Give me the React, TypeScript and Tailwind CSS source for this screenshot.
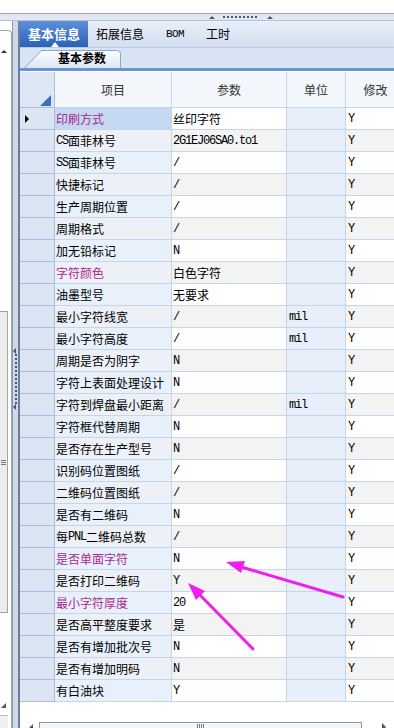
type Row = { name: string; value: string; unit?: string; hot?: boolean };

const rows: Row[] = [
  { name: '印刷方式', value: '丝印字符', hot: true },
  { name: 'CS面菲林号', value: '2G1EJ06SA0.to1' },
  { name: 'SS面菲林号', value: '/' },
  { name: '快捷标记', value: '/' },
  { name: '生产周期位置', value: '/' },
  { name: '周期格式', value: '/' },
  { name: '加无铅标记', value: 'N' },
  { name: '字符颜色', value: '白色字符', hot: true },
  { name: '油墨型号', value: '无要求' },
  { name: '最小字符线宽', value: '/', unit: 'mil' },
  { name: '最小字符高度', value: '/', unit: 'mil' },
  { name: '周期是否为阴字', value: 'N' },
  { name: '字符上表面处理设计', value: 'N' },
  { name: '字符到焊盘最小距离', value: '/', unit: 'mil' },
  { name: '字符框代替周期', value: 'N' },
  { name: '是否存在生产型号', value: 'N' },
  { name: '识别码位置图纸', value: '/' },
  { name: '二维码位置图纸', value: '/' },
  { name: '是否有二维码', value: 'N' },
  { name: '每PNL二维码总数', value: '/' },
  { name: '是否单面字符', value: 'N', hot: true },
  { name: '是否打印二维码', value: 'Y' },
  { name: '最小字符厚度', value: '20', hot: true },
  { name: '是否高平整度要求', value: '是' },
  { name: '是否有增加批次号', value: 'N' },
  { name: '是否有增加明码', value: 'N' },
  { name: '有白油块', value: 'Y' },
];

// ascii runs get the half-width mono look of the old grid font
function Mixed({ text }: { text: string }) {
  const parts = text.split(/([\x20-\x7e]+)/).filter(Boolean);
  return (
    <>
      {parts.map((p, i) =>
        /^[\x20-\x7e]+$/.test(p) ? (
          <span key={i} className="font-['Liberation_Mono',monospace] tracking-[-1.2px]">
            {p}
          </span>
        ) : (
          <span key={i}>{p}</span>
        )
      )}
    </>
  );
}

function LeftStrip() {
  return (
    <div className="w-[20px] shrink-0 flex">
      {/* collapsed left panel with its scrollbar */}
      <div className="w-[12px] flex flex-col bg-white">
        <div className="h-[9px] shrink-0" />
        <div className="flex-1 border-t border-r border-[#98a3b3] rounded-tr-[4px] flex flex-col">
          <div className="w-[8px] flex-1 flex flex-col">
            <div className="h-[19px] shrink-0" />
            <div className="h-[4px] flex justify-center">
              <div className="w-0 h-0 border-x-[3px] border-x-transparent border-b-[3px] border-b-[#333]" />
            </div>
            <div className="h-[257px] shrink-0" />
            <div className="h-[302px] shrink-0 border-t border-r border-b border-[#a3a3a3] bg-[#ededed] flex items-center justify-center">
              <div className="flex flex-col gap-[1px]">
                <div className="w-[5px] h-[1px] bg-[#777]" />
                <div className="w-[5px] h-[1px] bg-[#777]" />
                <div className="w-[5px] h-[1px] bg-[#777]" />
              </div>
            </div>
            <div className="flex-1" />
            <div className="h-[12px] shrink-0 flex items-start pl-[1px]">
              <div className="w-0 h-0 border-l-[5px] border-l-transparent border-b-[5px] border-b-[#555]" />
            </div>
            <div className="h-[13px] shrink-0 border-t border-[#c0c0c0] bg-[#efefef]" />
          </div>
        </div>
      </div>
      {/* vertical splitter */}
      <div className="w-[8px] border-l border-[#8e9bb0] border-r-[2px] border-r-[#6c7e99] bg-[#cfd9e7] flex flex-col">
        <div className="h-[327px] shrink-0" />
        <div className="flex flex-col items-start">
          <div className="w-0 h-0 border-y-[3px] border-y-transparent border-r-[3px] border-r-[#3b5a8a]" />
          <div className="ml-[2px] h-[50px] border-l-2 border-dotted border-[#3b5a8a]" />
          <div className="w-0 h-0 border-y-[3px] border-y-transparent border-r-[3px] border-r-[#3b5a8a]" />
        </div>
      </div>
    </div>
  );
}

function Tabs() {
  return (
    <div className="h-[27px] shrink-0 flex items-stretch bg-gradient-to-b from-[#e8eff9] to-[#d2def0] border-b border-[#bccbe0]">
      <div className="relative w-[68px] flex items-center justify-center bg-gradient-to-b from-[#5d90dc] to-[#2c60b4] text-white font-bold text-[13px]">
        基本信息
        <div className="absolute bottom-0 left-[31px] w-0 h-0 border-x-[4px] border-x-transparent border-b-[5px] border-b-white" />
      </div>
      <div className="ml-[8px] flex items-center">拓展信息</div>
      <div className="ml-[22px] flex items-center font-['Liberation_Mono',monospace] text-[11px] tracking-[-0.6px]">BOM</div>
      <div className="ml-[22px] flex items-center">工时</div>
    </div>
  );
}

function SubTabs() {
  return (
    <>
      <div className="h-[20px] shrink-0 bg-[#d8e4f4] flex">
        <div className="relative ml-[4px] w-[98px] h-[20px] flex items-center justify-center font-bold pl-[18px]">
          <svg className="absolute inset-0" width="98" height="20" viewBox="0 0 98 20">
            <defs>
              <linearGradient id="st" x1="0" y1="0" x2="0" y2="1">
                <stop offset="0" stopColor="#ffffff" />
                <stop offset="1" stopColor="#dbe5f3" />
              </linearGradient>
            </defs>
            <path d="M0.5 20 L17.5 2.5 L93 2.5 Q96.5 2.5 96.5 6 L96.5 20" fill="url(#st)" stroke="#8aa5cf" />
          </svg>
          <span className="relative">基本参数</span>
        </div>
      </div>
      <div className="h-[3px] shrink-0 bg-[#6a93cf]" />
      <div className="h-[1px] shrink-0 bg-white" />
    </>
  );
}

function Header() {
  return (
    <div className="h-[36px] shrink-0 flex text-[#333]">
      <div className="w-[35px] shrink-0 border-r border-b border-[#a9bddb] bg-[#dce6f4] flex items-end justify-end pr-[3px] pb-[1px]">
        <svg width="11" height="11" viewBox="0 0 11 11">
          <path d="M0 11 L11 11 L11 0 Z" fill="#3d6fc2" />
        </svg>
      </div>
      <div className="w-[117px] shrink-0 border-r border-b border-[#c5d5ea] bg-[#f3f6fa] flex items-center justify-center">项目</div>
      <div className="w-[115px] shrink-0 border-r border-b border-[#c5d5ea] bg-[#f3f6fa] flex items-center justify-center">参数</div>
      <div className="w-[59px] shrink-0 border-r border-b border-[#c5d5ea] bg-[#f3f6fa] flex items-center justify-center">单位</div>
      <div className="w-[60px] shrink-0 border-r border-b border-[#c5d5ea] bg-[#f3f6fa] flex items-center justify-center">修改</div>
    </div>
  );
}

function GridRow({ row, i }: { row: Row; i: number }) {
  const odd = i % 2 === 1;
  return (
    <div className="h-[22px] shrink-0 flex leading-none">
      <div className="w-[35px] shrink-0 border-r border-b border-[#a9bddb] bg-[#dbe5f3] flex items-center pl-[5px]">
        {i === 0 && <div className="w-0 h-0 border-y-[4px] border-y-transparent border-l-[4px] border-l-black" />}
      </div>
      <div
        className={`w-[117px] shrink-0 border-r border-b border-[#c5d5ea] flex items-center pl-[1px] whitespace-nowrap ${
          i === 0 ? 'bg-[#c5d9f3]' : odd ? 'bg-[#edf1f7]' : 'bg-[#e8f0fb]'
        } ${row.hot ? 'text-[#a8288f]' : 'text-black'}`}
      >
        <Mixed text={row.name} />
      </div>
      <div className={`w-[115px] shrink-0 border-r border-b border-[#c5d5ea] flex items-center pl-[1px] whitespace-nowrap ${odd ? 'bg-[#f3f3f3]' : 'bg-white'}`}>
        <Mixed text={row.value} />
      </div>
      <div className="w-[59px] shrink-0 border-r border-b border-[#c5d5ea] bg-[#e7effa] flex items-center pl-[2px]">
        {row.unit && <Mixed text={row.unit} />}
      </div>
      <div className={`w-[60px] shrink-0 border-r border-b border-[#c5d5ea] flex items-center pl-[2px] ${odd ? 'bg-[#f3f3f3]' : 'bg-white'}`}>
        <Mixed text="Y" />
      </div>
    </div>
  );
}

function HScroll() {
  return (
    <div className="h-[6px] shrink-0 flex">
      <div className="w-[19px] shrink-0 flex items-start pt-[2px] pl-[9px]">
        <div className="w-0 h-0 border-y-[4px] border-y-transparent border-r-[4px] border-r-[#555]" />
      </div>
      <div className="w-[323px] shrink-0 border-t border-l border-r border-[#8f9aa8] bg-[#f4f4f4] flex justify-center pt-[1px] gap-[1px]">
        <div className="w-[1px] h-full bg-[#777]" />
        <div className="w-[1px] h-full bg-[#777]" />
        <div className="w-[1px] h-full bg-[#777]" />
        <div className="w-[1px] h-full bg-[#777]" />
      </div>
      <div className="flex-1 flex items-start pt-[1px] pl-[20px]">
        <div className="w-0 h-0 border-y-[4px] border-y-transparent border-l-[4px] border-l-[#555]" />
      </div>
    </div>
  );
}

export default function App() {
  return (
    <div className="relative w-[394px] h-[728px] overflow-hidden bg-white flex flex-col text-[12px] text-black font-['Noto_Sans_CJK_SC',sans-serif]">
      {/* top splitter */}
      <div className="h-[13px] shrink-0 bg-white" />
      <div className="h-[8px] shrink-0 border-t border-[#9aa5b5] border-b border-b-[#b7c2d2] bg-[#e2e8f0] flex items-center pl-[209px]">
        <div className="w-0 h-0 border-x-[3px] border-x-transparent border-b-[3px] border-b-[#3b5a8a]" />
        <div className="ml-[8px] w-[34px] border-t-2 border-dotted border-[#3b5a8a]" />
        <div className="ml-[10px] w-0 h-0 border-x-[3px] border-x-transparent border-b-[3px] border-b-[#3b5a8a]" />
      </div>

      <div className="flex flex-1 min-h-0">
        <LeftStrip />
        <div className="flex-1 min-w-0 flex flex-col overflow-hidden">
          <Tabs />
          <SubTabs />
          <Header />
          {rows.map((r, i) => (
            <GridRow key={r.name} row={r} i={i} />
          ))}
          <div className="flex-1 bg-white" />
          <HScroll />
        </div>
      </div>

      {/* magenta annotation arrows */}
      <svg className="absolute inset-0 pointer-events-none" width="394" height="728" viewBox="0 0 394 728">
        <line x1="343" y1="597" x2="238" y2="566" stroke="#ee1fee" strokeWidth="3" strokeLinecap="round" />
        <polygon points="226,562 245,561 241,573" fill="#ee1fee" />
        <line x1="253" y1="649" x2="198" y2="593" stroke="#ee1fee" strokeWidth="3" strokeLinecap="round" />
        <polygon points="188,583 205,591 196,600" fill="#ee1fee" />
      </svg>
    </div>
  );
}
